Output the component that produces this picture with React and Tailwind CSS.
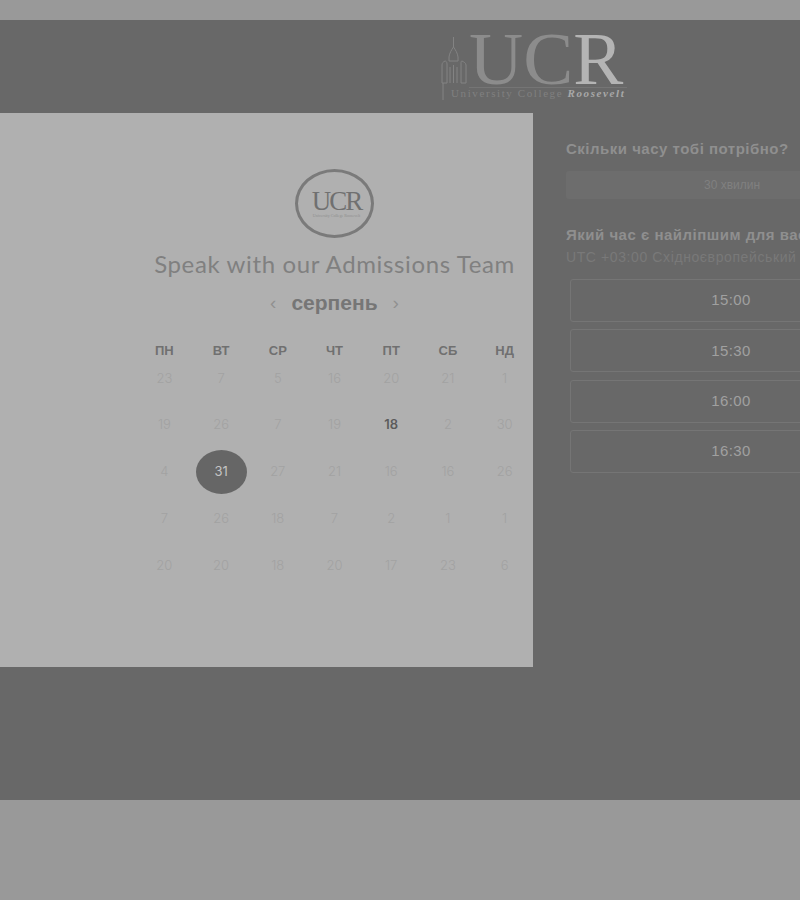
const rows = [
  [23, 7, 5, 16, 20, 21, 1],
  [19, 26, 7, 19, 18, 2, 30],
  [4, 31, 27, 21, 16, 16, 26],
  [7, 26, 18, 7, 2, 1, 1],
  [20, 20, 18, 20, 17, 23, 6],
];
const days = ["ПН", "ВТ", "СР", "ЧТ", "ПТ", "СБ", "НД"];
const times = ["15:00", "15:30", "16:00", "16:30"];
const sans = "font-['Liberation_Sans',Arial,sans-serif]";

function Tower() {
  return (
    <svg width="30" height="64" viewBox="0 0 30 64" fill="none" stroke="#838383" strokeWidth="1" className="absolute left-0 top-[7px]">
      <path d="M12.5 0v10M12.5 10c-2 3-4 6-4.500 10v4M12.500 10c2 3 4 6 4.500 10v4M8 24h9M4 24c-2 1-3 2-3 4v18h5V27c0-2-1-3-2-3zM21 24c2 1 4 2 4 4v18h-5V27c0-2 0-3 1-3zM9 30v16M12.500 28v18M16 30v16M2 46v17" />
    </svg>
  );
}

function Cell({ v }) {
  if (v === 31) {
    return (
      <div className="flex items-center justify-center">
        <div className="w-[51px] h-[44px] rounded-[50%] bg-[#666666] flex items-center justify-center text-[#c4c4c4] text-[13px]">31</div>
      </div>
    );
  }
  return <div className="flex items-center justify-center text-[13px] font-light text-[#a2a2a2]">{v}</div>;
}

export default function App() {
  return (
    <div className={`w-[800px] h-[900px] overflow-hidden bg-[#999999] flex flex-col pt-5 ${sans}`}>
      <header className="h-[93px] shrink-0 bg-[#686868] pl-[441px] pt-[10px]">
        <div className="relative w-[186px]">
          <Tower />
          <div className="ml-[28px] font-['Liberation_Serif',serif] text-[75px] leading-[58px] text-[#8c8c8c] h-[58px] whitespace-nowrap border-b border-[#757575]">
            UC<span className="text-[#b4b4b4]">R</span>
          </div>
          <div className="ml-[10px] font-['Liberation_Serif',serif] text-[11px] leading-[11px] whitespace-nowrap text-[#808080] tracking-[1.6px]">
            University College <span className="italic font-bold text-[#a8a8a8]">Roosevelt</span>
          </div>
        </div>
      </header>

      <main className="h-[554px] shrink-0 flex overflow-hidden">
        <section className="w-[533px] shrink-0 bg-[#b0b0b0] pl-[136px] flex flex-col">
          <div className="flex justify-center pt-[56px]">
            <div className="w-[79px] h-[69px] rounded-[50%] border-[3px] border-[#7a7a7a] flex flex-col items-center justify-center font-['Liberation_Serif',serif] text-[#707070]">
              <div className="text-[27px] leading-[24px] tracking-[-2px] pl-[4px]">UCR</div>
              <div className="text-[4px] leading-[5px] text-[#8f8f8f] whitespace-nowrap pl-[4px]">University College Roosevelt</div>
            </div>
          </div>
          <h1 className="mt-[11px] text-center text-[24px] leading-[30px] tracking-[0.63px] text-[#808080] font-['Lato',sans-serif] whitespace-nowrap">
            Speak with our Admissions Team
          </h1>
          <div className="mt-[8px] h-[30px] flex items-center justify-center gap-[15px]">
            <span className="text-[#909090] text-[19px] leading-none">‹</span>
            <span className="text-[21px] leading-none font-bold text-[#767676]">серпень</span>
            <span className="text-[#909090] text-[19px] leading-none">›</span>
          </div>
          <div className="mt-[24px] grid grid-cols-7 h-[10px] items-center text-center text-[13px] font-bold text-[#707070]">
            {days.map((d) => (
              <div key={d}>{d}</div>
            ))}
          </div>
          <div className="mt-[4px] grid grid-cols-7 auto-rows-[46.8px] font-['Inter',sans-serif]">
            {rows.flatMap((r, i) =>
              r.map((v, j) =>
                i === 1 && j === 4 ? (
                  <div key={`${i}-${j}`} className="flex items-center justify-center text-[13px] font-semibold text-[#5c5c5c]">18</div>
                ) : (
                  <Cell key={`${i}-${j}`} v={v} />
                )
              )
            )}
          </div>
        </section>

        <section className="flex-1 min-w-0 bg-[#686868] pl-[33px] pt-[27px] overflow-hidden">
          <div className="w-[332px]">
            <h2 className="text-[15px] leading-[18px] font-bold text-[#8f8f8f] tracking-[0.5px] whitespace-nowrap">Скільки часу тобі потрібно?</h2>
            <div className="mt-[13px] h-[28px] rounded-[3px] bg-[#6d6d6d] flex items-center justify-center text-[12px] text-[#808080]">30 хвилин</div>
            <h2 className="mt-[27px] text-[15px] leading-[18px] font-bold text-[#8f8f8f] tracking-[0.5px] whitespace-nowrap">Який час є найліпшим для вас?</h2>
            <div className="mt-[5px] text-[14px] leading-[17px] text-[#797979] tracking-[0.6px] whitespace-nowrap">UTC +03:00 Східноєвропейський час</div>
            <div className="mt-[13px] ml-[4px] w-[322px] flex flex-col gap-[7.400px]">
              {times.map((t) => (
                <div key={t} className="h-[43px] rounded-[3px] border border-[#757575] flex items-center justify-center text-[15px] text-[#a0a0a0] tracking-[0.4px]">{t}</div>
              ))}
            </div>
          </div>
        </section>
      </main>

      <footer className="h-[133px] shrink-0 bg-[#686868]" />
    </div>
  );
}
